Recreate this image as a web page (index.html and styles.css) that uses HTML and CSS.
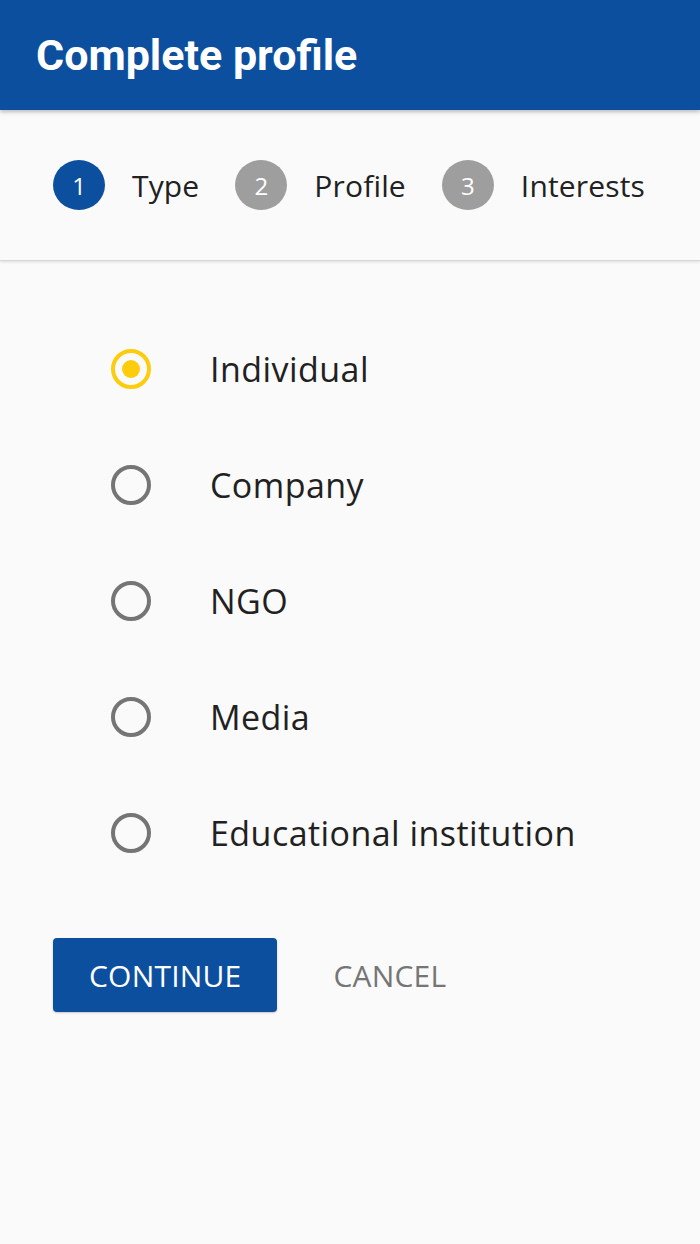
FILE: index.html
```html
<!DOCTYPE html>
<html lang="en">
<head>
<meta charset="utf-8">
<title>Complete profile</title>
<link rel="stylesheet" href="styles.css">
</head>
<body>
<header class="appbar">
  <h1 class="appbar-title">Complete profile</h1>
</header>
<nav class="stepper">
  <div class="step">
    <span class="step-num active">1</span>
    <span class="step-label">Type</span>
  </div>
  <div class="step">
    <span class="step-num">2</span>
    <span class="step-label">Profile</span>
  </div>
  <div class="step">
    <span class="step-num">3</span>
    <span class="step-label">Interests</span>
  </div>
</nav>
<main class="content">
  <ul class="radio-list">
    <li class="radio-row"><span class="radio checked"></span><span class="radio-label">Individual</span></li>
    <li class="radio-row"><span class="radio"></span><span class="radio-label">Company</span></li>
    <li class="radio-row"><span class="radio"></span><span class="radio-label">NGO</span></li>
    <li class="radio-row"><span class="radio"></span><span class="radio-label">Media</span></li>
    <li class="radio-row"><span class="radio"></span><span class="radio-label">Educational institution</span></li>
  </ul>
  <div class="actions">
    <button class="btn btn-primary">CONTINUE</button>
    <button class="btn btn-text">CANCEL</button>
  </div>
</main>
</body>
</html>
```
FILE: styles.css
```css
* { box-sizing: border-box; }
html, body {
  margin: 0;
  padding: 0;
  background: #fafafa;
}
body {
  width: 700px;
  height: 1244px;
  overflow: hidden;
  font-family: "Open Sans", "Noto Sans", sans-serif;
  color: #212121;
}
.appbar {
  position: relative;
  z-index: 2;
  height: 110px;
  background: #0c4f9f;
  display: flex;
  align-items: center;
  padding-left: 36px;
  box-shadow: 0 2px 4px rgba(0,0,0,0.25);
}
.appbar-title {
  margin: 0;
  font-family: Roboto, "Liberation Sans", sans-serif;
  font-weight: 700;
  font-size: 43px;
  line-height: 110px;
  color: #ffffff;
}
.stepper {
  position: relative;
  z-index: 1;
  height: 151px;
  display: flex;
  align-items: center;
  padding-left: 53px;
  gap: 36px;
  background: #fafafa;
  border-bottom: 1px solid #d6d6d6;
  box-shadow: 0 1px 3px rgba(0,0,0,0.12);
}
.step {
  display: flex;
  align-items: center;
  gap: 27px;
}
.step-num {
  width: 52px;
  height: 50px;
  border-radius: 50%;
  background: #9e9e9e;
  color: #ffffff;
  font-size: 24px;
  display: flex;
  align-items: center;
  justify-content: center;
}
.step-num.active { background: #0c4f9f; }
.step-label {
  font-size: 30px;
  letter-spacing: 0.15px;
  color: #212121;
}
.content {
  padding-top: 50px;
}
.radio-list {
  list-style: none;
  margin: 0;
  padding: 0 0 0 111px;
}
.radio-row {
  height: 116px;
  display: flex;
  align-items: center;
  gap: 59px;
}
.radio {
  width: 40px;
  height: 40px;
  border-radius: 50%;
  border: 4px solid #757575;
  display: flex;
  align-items: center;
  justify-content: center;
  flex: none;
}
.radio.checked { border-color: #fdcc0d; }
.radio.checked::after {
  content: "";
  width: 18px;
  height: 18px;
  border-radius: 50%;
  background: #fdcc0d;
}
.radio-label {
  font-size: 34px;
  letter-spacing: 0.45px;
  color: #212121;
}
.actions {
  margin-top: 47px;
  padding-left: 53px;
  display: flex;
  align-items: center;
  gap: 20px;
}
.btn {
  font-family: "Open Sans", "Noto Sans", sans-serif;
  font-size: 30px;
  letter-spacing: 0.2px;
  height: 74px;
  padding: 0 36px;
  border: none;
  border-radius: 4px;
  background: transparent;
  cursor: pointer;
}
.btn-primary {
  background: #0c4f9f;
  color: #ffffff;
  box-shadow: 0 1px 2px rgba(0,0,0,0.2);
}
.btn-text {
  color: #757575;
}
```
